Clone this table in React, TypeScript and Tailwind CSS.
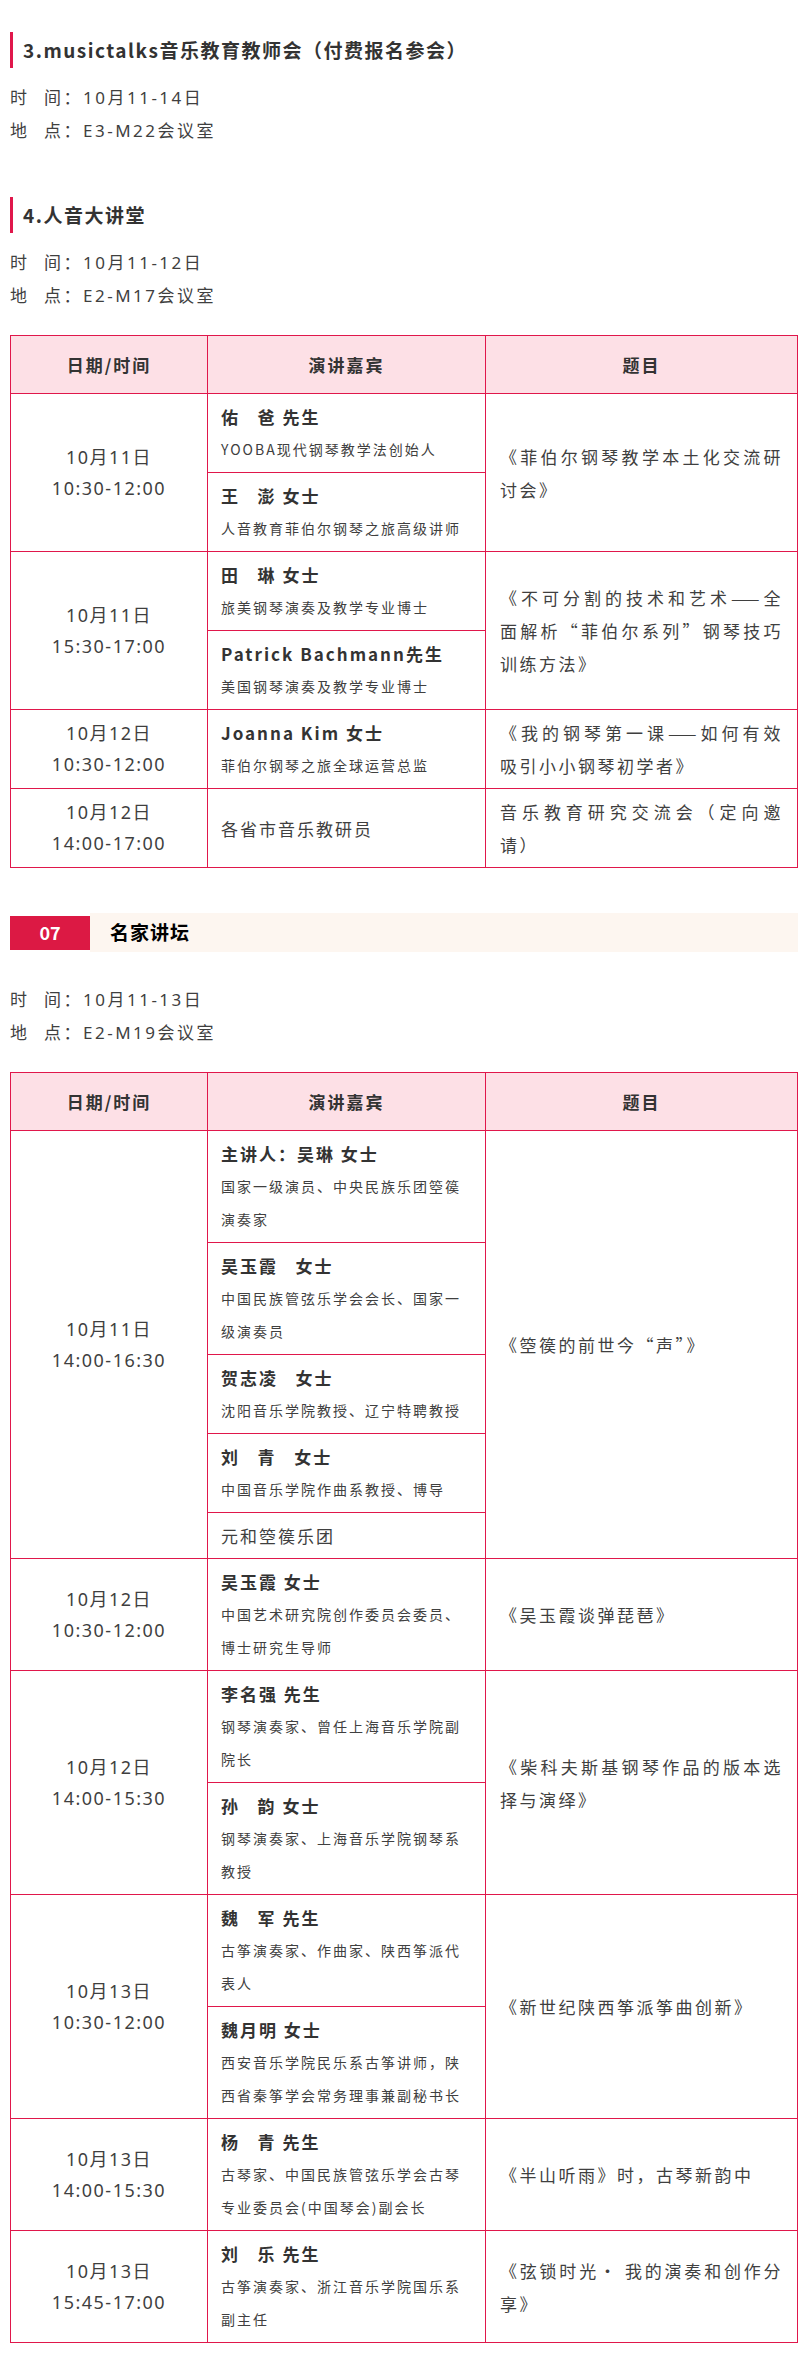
import React from "react";

type Speaker = { name?: string; desc?: string; plain?: string };
type Row = { date: string; time: string; speakers: Speaker[]; title: string };

const table1: Row[] = [
  {
    date: "10月11日",
    time: "10:30-12:00",
    speakers: [
      { name: "佑   爸 先生", desc: "YOOBA现代钢琴教学法创始人" },
      { name: "王   澎 女士", desc: "人音教育菲伯尔钢琴之旅高级讲师" },
    ],
    title: "《菲伯尔钢琴教学本土化交流研讨会》",
  },
  {
    date: "10月11日",
    time: "15:30-17:00",
    speakers: [
      { name: "田   琳 女士", desc: "旅美钢琴演奏及教学专业博士" },
      { name: "Patrick Bachmann先生", desc: "美国钢琴演奏及教学专业博士" },
    ],
    title: "《不可分割的技术和艺术——全面解析“菲伯尔系列”钢琴技巧训练方法》",
  },
  {
    date: "10月12日",
    time: "10:30-12:00",
    speakers: [{ name: "Joanna Kim 女士", desc: "菲伯尔钢琴之旅全球运营总监" }],
    title: "《我的钢琴第一课——如何有效吸引小小钢琴初学者》",
  },
  {
    date: "10月12日",
    time: "14:00-17:00",
    speakers: [{ plain: "各省市音乐教研员" }],
    title: "音乐教育研究交流会（定向邀请）",
  },
];

const table2: Row[] = [
  {
    date: "10月11日",
    time: "14:00-16:30",
    speakers: [
      { name: "主讲人：吴琳 女士", desc: "国家一级演员、中央民族乐团箜篌演奏家" },
      { name: "吴玉霞   女士", desc: "中国民族管弦乐学会会长、国家一级演奏员" },
      { name: "贺志凌   女士", desc: "沈阳音乐学院教授、辽宁特聘教授" },
      { name: "刘   青   女士", desc: "中国音乐学院作曲系教授、博导" },
      { plain: "元和箜篌乐团" },
    ],
    title: "《箜篌的前世今“声”》",
  },
  {
    date: "10月12日",
    time: "10:30-12:00",
    speakers: [{ name: "吴玉霞 女士", desc: "中国艺术研究院创作委员会委员、博士研究生导师" }],
    title: "《吴玉霞谈弹琵琶》",
  },
  {
    date: "10月12日",
    time: "14:00-15:30",
    speakers: [
      { name: "李名强 先生", desc: "钢琴演奏家、曾任上海音乐学院副院长" },
      { name: "孙   韵 女士", desc: "钢琴演奏家、上海音乐学院钢琴系教授" },
    ],
    title: "《柴科夫斯基钢琴作品的版本选择与演绎》",
  },
  {
    date: "10月13日",
    time: "10:30-12:00",
    speakers: [
      { name: "魏   军 先生", desc: "古筝演奏家、作曲家、陕西筝派代表人" },
      { name: "魏月明 女士", desc: "西安音乐学院民乐系古筝讲师，陕西省秦筝学会常务理事兼副秘书长" },
    ],
    title: "《新世纪陕西筝派筝曲创新》",
  },
  {
    date: "10月13日",
    time: "14:00-15:30",
    speakers: [{ name: "杨   青 先生", desc: "古琴家、中国民族管弦乐学会古琴专业委员会(中国琴会)副会长" }],
    title: "《半山听雨》时，古琴新韵中",
  },
  {
    date: "10月13日",
    time: "15:45-17:00",
    speakers: [{ name: "刘   乐 先生", desc: "古筝演奏家、浙江音乐学院国乐系副主任" }],
    title: "《弦锁时光· 我的演奏和创作分享》",
  },
];

function Heading({ children }: { children: React.ReactNode }) {
  return (
    <div className="flex items-center h-[36px] border-l-[3px] border-[#e0174b] pl-[10px] text-[19px] font-bold tracking-[1.5px] text-[#333]">
      {children}
    </div>
  );
}

function Info({ time, place }: { time: string; place: string }) {
  return (
    <div className="text-[17px] leading-[33px] tracking-[2.5px] text-[#3f3f3f] font-['Noto_Sans','Noto_Sans_CJK_SC',sans-serif]">
      <div className="flex">
        <span className="inline-block w-[34px]">时</span>
        <span>间：{time}</span>
      </div>
      <div className="flex">
        <span className="inline-block w-[34px]">地</span>
        <span>点：{place}</span>
      </div>
    </div>
  );
}

function Table({ rows }: { rows: Row[] }) {
  return (
    <div className="border border-[#e0174b] text-[#3f3f3f]">
      <div className="flex h-[57px] bg-[#fde0e6] text-[17px] font-bold tracking-[2px] text-[#333]">
        <div className="w-[196px] flex items-center justify-center">日期/时间</div>
        <div className="w-[278px] border-l border-[#e0174b] flex items-center justify-center">演讲嘉宾</div>
        <div className="flex-1 border-l border-[#e0174b] flex items-center justify-center">题目</div>
      </div>
      {rows.map((r, i) => (
        <div key={i} className="flex border-t border-[#e0174b]">
          <div className="w-[196px] flex flex-col items-center justify-center text-[18px] leading-[31px] tracking-[1.5px] font-['Noto_Sans','Noto_Sans_CJK_SC',sans-serif]">
            <div>{r.date}</div>
            <div>{r.time}</div>
          </div>
          <div className="w-[278px] border-l border-[#e0174b] flex flex-col">
            {r.speakers.map((s, j) => (
              <div
                key={j}
                className={`grow flex flex-col justify-center px-[13px] py-[6px] ${j > 0 ? "border-t border-[#e0174b]" : ""}`}
              >
                {s.plain ? (
                  <div className="text-[17px] leading-[33px] tracking-[2px]">{s.plain}</div>
                ) : (
                  <>
                    <div className="text-[17px] leading-[33px] font-bold tracking-[2px] text-[#333] whitespace-pre">{s.name}</div>
                    <div className="text-[14px] leading-[33px] tracking-[2px] text-[#404040]">{s.desc}</div>
                  </>
                )}
              </div>
            ))}
          </div>
          <div className="flex-1 border-l border-[#e0174b] flex items-center px-[14px] py-[6px]">
            <div className="text-[17px] leading-[33px] tracking-[2.5px] text-justify">{r.title}</div>
          </div>
        </div>
      ))}
    </div>
  );
}

export default function App() {
  return (
    <div className="w-[808px] bg-white px-[10px] pt-[32px] pb-[24px] font-['Noto_Sans_CJK_SC',sans-serif]">
      <Heading>3.musictalks音乐教育教师会（付费报名参会）</Heading>
      <div className="mt-[13px]">
        <Info time="10月11-14日" place="E3-M22会议室" />
      </div>
      <div className="mt-[50px]">
        <Heading>4.人音大讲堂</Heading>
      </div>
      <div className="mt-[13px]">
        <Info time="10月11-12日" place="E2-M17会议室" />
      </div>
      <div className="mt-[23px]">
        <Table rows={table1} />
      </div>

      <div className="mt-[45px] flex items-center h-[39px]">
        <div className="w-[80px] h-[34px] bg-[#dc1944] flex items-center justify-center text-white font-bold text-[18px]">
          07
        </div>
        <div className="flex-1 h-[39px] bg-[#fdf6f0] flex items-center pl-[20px] text-[19px] font-bold tracking-[1px] text-black">
          名家讲坛
        </div>
      </div>
      <div className="mt-[31px]">
        <Info time="10月11-13日" place="E2-M19会议室" />
      </div>
      <div className="mt-[23px]">
        <Table rows={table2} />
      </div>
    </div>
  );
}
